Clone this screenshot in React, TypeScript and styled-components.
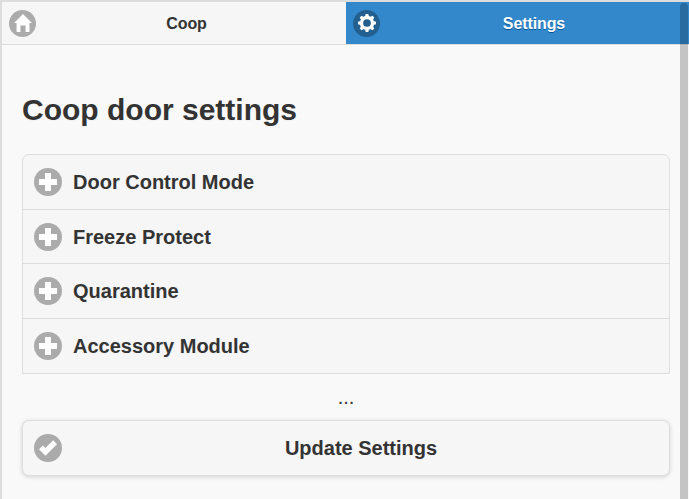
import React from 'react';
import styled, { createGlobalStyle, css } from 'styled-components';

const GlobalStyle = createGlobalStyle`
  * { box-sizing: border-box; }
  html, body { margin: 0; height: 100%; overflow: hidden; }
  body {
    background: #f9f9f9;
    color: #333;
    font-family: "Liberation Sans", Arial, sans-serif;
    text-shadow: 0 1px 0 #f3f3f3;
  }
`;

const Page = styled.div`
  position: relative;
  height: 499px;
  overflow: hidden;
  border-top: 2px solid #ddd;
  border-left: 2px solid #ddd;
`;

const NavBar = styled.nav`
  display: grid;
  grid-template-columns: 344px 343px;
  height: 43px;
  border-bottom: 1px solid #ddd;
`;

const Tab = styled.a<{ $active?: boolean }>`
  display: grid;
  grid-template-columns: 27px 1fr 27px;
  align-items: center;
  padding: 0 19px 0 7px;
  background: #f6f6f6;
  font-size: 16px;
  font-weight: bold;
  text-align: center;
  ${(p) =>
    p.$active &&
    css`
      padding-right: 10px;
      background: #3388cc;
      color: #fff;
      text-shadow: 0 1px 0 #005599;
    `}
`;

const TabLabel = styled.span<{ $shift: number }>`
  font-size: 16px;
  letter-spacing: -0.1px;
  line-height: 20px;
  padding-top: 1px;
  padding-left: ${(p) => p.$shift}px;
`;

const Disc = styled.span<{ $size: number; $dark?: boolean }>`
  display: flex;
  align-items: center;
  justify-content: center;
  flex: none;
  width: ${(p) => p.$size}px;
  height: ${(p) => p.$size}px;
  border-radius: 50%;
  background: ${(p) => (p.$dark ? '#235f8f' : '#ababab')};
`;

const Glyph = styled.svg<{ $size: number }>`
  display: block;
  width: ${(p) => p.$size}px;
  height: ${(p) => p.$size}px;
  fill: #fff;
`;

const Content = styled.main`
  padding: 45px 19px 0 20px;
`;

const Title = styled.h1`
  margin: 0 0 25px;
  font-size: 30px;
  line-height: 39px;
  font-weight: bold;
`;

const Group = styled.section`
  width: 648px;
  border: 1px solid #ddd;
  border-radius: 7px 7px 0 0;
  overflow: hidden;
  background: #f6f6f6;
`;

const Row = styled.div`
  display: flex;
  align-items: center;
  gap: 11px;
  height: 54.5px;
  padding: 0.6px 0 0 11px;
  font-size: 20px;
  line-height: 26px;
  font-weight: bold;
  border-bottom: 1px solid #ddd;
  &:last-child { padding-top: 0; border-bottom: 0; }
`;

const More = styled.p`
  margin: 10px 0 9px;
  font-size: 20px;
  line-height: 27px;
  text-align: center;
`;

const UpdateButton = styled.button`
  display: grid;
  grid-template-columns: 28px 1fr;
  align-items: center;
  width: 648px;
  height: 56px;
  padding: 0 9px 0 11px;
  border: 1px solid #ddd;
  border-radius: 7px;
  background: #f6f6f6;
  box-shadow: 0 1px 4px rgba(0, 0, 0, 0.16);
  color: inherit;
  font: bold 20px/26px "Liberation Sans", Arial, sans-serif;
  text-shadow: inherit;
`;

const ScrollThumb = styled.div`
  position: absolute;
  top: 1px;
  right: 1px;
  width: 8px;
  height: 520px;
  border-radius: 4px;
  background: rgba(0, 0, 0, 0.21);
`;

const PlusIcon = () => (
  <Glyph $size={18} viewBox="0 0 14 14">
    <polygon points="14,4.7 9.3,4.7 9.3,0 4.7,0 4.7,4.7 0,4.7 0,9.3 4.7,9.3 4.7,14 9.3,14 9.3,9.3 14,9.3" />
  </Glyph>
);

const CheckIcon = () => (
  <Glyph $size={18} viewBox="0 0 14 14">
    <polygon points="14,4 11,1 5,7 3,5 0,8 5,13" />
  </Glyph>
);

const HomeIcon = () => (
  <Glyph $size={18} viewBox="0 0 14 14">
    <polygon points="7,0 0,7 2,7 2,14 5,14 5,9 9,9 9,14 12,14 12,7 14,7" />
  </Glyph>
);

const GearIcon = () => (
  <Glyph $size={18} viewBox="-7 -7 14 14">
    <circle r="4.3" fill="none" stroke="#fff" strokeWidth="2.6" />
    {[0, 45, 90, 135, 180, 225, 270, 315].map((angle) => (
      <path key={angle} d="M-1.5-5 -1-7H1L1.5-5Z" transform={`rotate(${angle})`} />
    ))}
  </Glyph>
);

const sections = ['Door Control Mode', 'Freeze Protect', 'Quarantine', 'Accessory Module'];

export default function App() {
  return (
    <>
      <GlobalStyle />
      <Page>
        <NavBar>
          <Tab>
            <Disc $size={27}><HomeIcon /></Disc>
            <TabLabel $shift={37}>Coop</TabLabel>
          </Tab>
          <Tab $active>
            <Disc $size={27} $dark><GearIcon /></Disc>
            <TabLabel $shift={36}>Settings</TabLabel>
          </Tab>
        </NavBar>
        <Content>
          <Title>Coop door settings</Title>
          <Group>
            {sections.map((name) => (
              <Row key={name}>
                <Disc $size={28}><PlusIcon /></Disc>
                {name}
              </Row>
            ))}
          </Group>
          <More>...</More>
          <UpdateButton type="button">
            <Disc $size={28}><CheckIcon /></Disc>
            <span>Update Settings</span>
          </UpdateButton>
        </Content>
        <ScrollThumb />
      </Page>
    </>
  );
}
